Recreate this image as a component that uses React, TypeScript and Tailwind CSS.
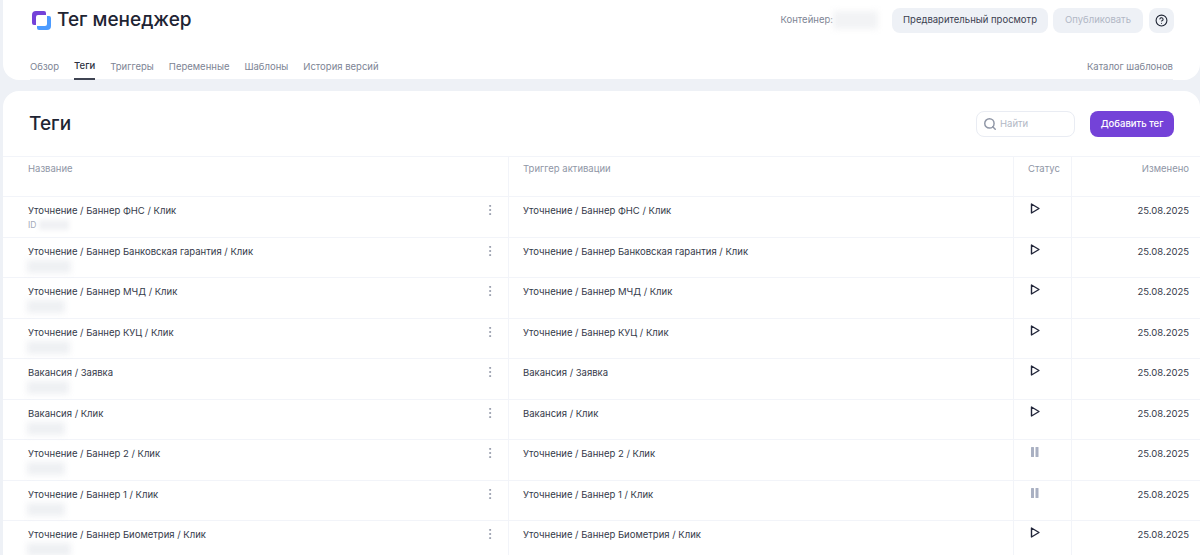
import React from 'react';
import { Search, EllipsisVertical, CircleHelp } from 'lucide-react';

const tabs = ['Обзор', 'Теги', 'Триггеры', 'Переменные', 'Шаблоны', 'История версий'];

const rows = [
  { name: 'Уточнение / Баннер ФНС / Клик', paused: false, idLabel: true, blurClass: '' },
  { name: 'Уточнение / Баннер Банковская гарантия / Клик', paused: false, blurClass: 'w-[44px]' },
  { name: 'Уточнение / Баннер МЧД / Клик', paused: false, blurClass: 'w-[38px]' },
  { name: 'Уточнение / Баннер КУЦ / Клик', paused: false, blurClass: 'w-[43px]' },
  { name: 'Вакансия / Заявка', paused: false, blurClass: 'w-[42px]' },
  { name: 'Вакансия / Клик', paused: false, blurClass: 'w-[38px]' },
  { name: 'Уточнение / Баннер 2 / Клик', paused: true, blurClass: 'w-[38px]' },
  { name: 'Уточнение / Баннер 1 / Клик', paused: true, blurClass: 'w-[38px]' },
  { name: 'Уточнение / Баннер Биометрия / Клик', paused: false, blurClass: 'w-[44px]' },
];

const Logo = () => (
  <svg width="19" height="19" viewBox="0 0 19 19" fill="none">
    <path d="M4 0h8a2 2 0 0 1 2 2v2H6a2 2 0 0 0-2 2v8H2a2 2 0 0 1-2-2V4a4 4 0 0 1 4-4z" fill="#7442d8" />
    <path d="M15 19H7a2 2 0 0 1-2-2v-2h8a2 2 0 0 0 2-2V5h2a2 2 0 0 1 2 2v8a4 4 0 0 1-4 4z" fill="#4b9bff" />
  </svg>
);

const PlayIcon = () => (
  <svg width="12" height="13" viewBox="0 0 12 13" fill="none">
    <path d="M2.5 2L10 6.5L2.5 11Z" stroke="#22263a" strokeWidth="1.4" strokeLinejoin="round" />
  </svg>
);

const PauseIcon = () => (
  <svg width="12" height="13" viewBox="0 0 12 13" fill="#a9b0c2">
    <rect x="2" y="2" width="3" height="10" rx="0.5" />
    <rect x="6.5" y="2" width="3" height="10" rx="0.5" />
  </svg>
);

type RowProps = { name: string; paused: boolean; idLabel?: boolean; blurClass: string };

const Row = ({ name, paused, idLabel, blurClass }: RowProps) => (
  <div className="grid h-[40.5px] grid-cols-[506px_505px_58px_1fr] border-b border-[#f2f4f9] text-[9.5px] leading-[14px] text-[#343a4a]">
    <div className="relative border-r border-[#f2f4f9] pl-[25px] pt-[7px]">
      <div>{name}</div>
      {idLabel ? (
        <div className="flex items-center text-[8.5px] text-[#a3a9b8]">
          ID
          <span className="ml-[3px] h-[10px] w-[30px] bg-[#f0f1f4] blur-[2px]" />
        </div>
      ) : (
        <div className={`-ml-[1px] mt-[1px] h-[13px] bg-[#eef0f3] blur-[3px] ${blurClass}`} />
      )}
      <EllipsisVertical size={14} strokeWidth={1.6} className="absolute right-[11px] top-[6px] text-[#8f96a6]" />
    </div>
    <div className="border-r border-[#f2f4f9] pl-[14px] pt-[7px]">{name}</div>
    <div className="border-r border-[#f2f4f9] pl-[15px] pt-[5px]">{paused ? <PauseIcon /> : <PlayIcon />}</div>
    <div className="pr-[11px] pt-[7px] text-right">25.08.2025</div>
  </div>
);

export default function App() {
  return (
    <div className="flex h-[555px] flex-col gap-[11px] overflow-hidden bg-[#eef1f6] pl-[3px] font-['Inter','Noto_Sans',sans-serif]">
      <header className="h-[80px] shrink-0 rounded-b-[16px] bg-white">
        <div className="flex h-[40px] items-center">
          <div className="ml-[29px] flex items-center">
            <Logo />
            <span className="ml-[6px] text-[19px] font-medium text-[#1e2433]">Тег менеджер</span>
          </div>
          <div className="ml-auto flex items-center text-[9.5px]">
            <span className="text-[#7d8494]">Контейнер:</span>
            <span className="h-[18px] w-[45px] bg-[#f2f3f5] blur-[3px]" />
            <button className="ml-[14px] h-[25px] w-[156px] rounded-[8px] bg-[#eef1f6] text-[#3a4050]">Предварительный просмотр</button>
            <button className="ml-[5px] h-[25px] w-[90px] rounded-[8px] bg-[#eef1f6] text-[#b1b7c5]">Опубликовать</button>
            <button className="ml-[6px] mr-[26px] flex h-[25px] w-[25px] items-center justify-center rounded-[8px] bg-[#eef1f6] text-[#1e2433]">
              <CircleHelp size={13} strokeWidth={2} />
            </button>
          </div>
        </div>
        <nav className="mx-[27px] mt-[15px] flex h-[25px] items-center justify-between border-b border-[#eef1f6] text-[9.5px] text-[#7d8494]">
          <div className="flex h-full gap-[15px]">
            {tabs.map((tab) => (
              <span
                key={tab}
                className={tab === 'Теги' ? 'flex h-[25px] items-center border-b-2 border-[#3f4452] font-medium text-[#2b3040]' : 'flex h-[24px] items-center'}
              >
                {tab}
              </span>
            ))}
          </div>
          <span>Каталог шаблонов</span>
        </nav>
      </header>

      <main className="flex-1 rounded-t-[16px] bg-white">
        <div className="flex h-[65px] items-center justify-between px-[26px] pt-[1px]">
          <h1 className="text-[19px] font-medium text-[#1e2433]">Теги</h1>
          <div className="flex items-center gap-[15px]">
            <div className="flex h-[26px] w-[99px] items-center gap-[3px] rounded-[8px] border border-[#e9ecf3] pl-[6px] text-[9.5px] text-[#b1b7c5]">
              <Search size={14} strokeWidth={2.5} className="text-[#8f96a6]" />
              Найти
            </div>
            <button className="h-[26px] w-[84px] rounded-[8px] bg-[#7442d8] text-[9.5px] font-medium text-white">Добавить тег</button>
          </div>
        </div>
        <div className="grid h-[41px] grid-cols-[506px_505px_58px_1fr] border-y border-[#f2f4f9] text-[9.5px] text-[#8f96a6]">
          <div className="border-r border-[#f2f4f9] pl-[25px] pt-[5px]">Название</div>
          <div className="border-r border-[#f2f4f9] pl-[14px] pt-[5px]">Триггер активации</div>
          <div className="border-r border-[#f2f4f9] pl-[14px] pt-[5px]">Статус</div>
          <div className="pr-[11px] pt-[5px] text-right">Изменено</div>
        </div>
        {rows.map((row) => (
          <Row key={row.name} {...row} />
        ))}
      </main>
    </div>
  );
}
